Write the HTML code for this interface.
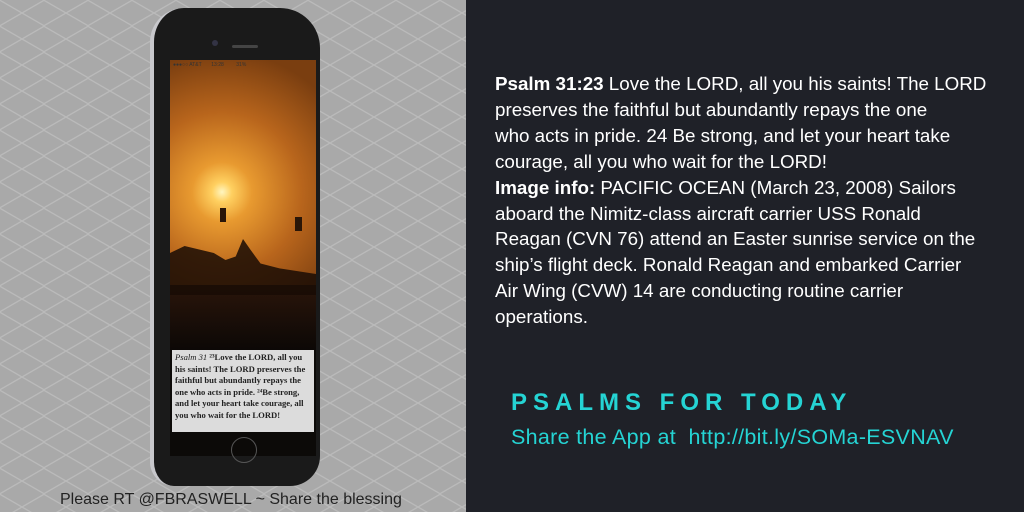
<!DOCTYPE html><html><head><style>
body{margin:0;width:1024px;height:512px;overflow:hidden;position:relative;font-family:"Liberation Sans",sans-serif}
#l{position:absolute;left:0;top:0;width:466px;height:512px;background-color:#a9a9a9;
background-image:linear-gradient(30deg,transparent 48%,#bababa 49%,#bababa 51%,transparent 52%),linear-gradient(150deg,transparent 48%,#bababa 49%,#bababa 51%,transparent 52%);background-size:44px 26px}
#r{position:absolute;left:466px;top:0;width:558px;height:512px;background:#1f2128}
.t{position:absolute;left:495px;top:71px;width:520px;white-space:nowrap;color:#fff;font-family:"Liberation Sans",sans-serif;font-size:18.8px;line-height:25.9px}
.ph{position:absolute;left:150px;top:8px;width:170px;height:478px;border-radius:34px 40px 30px 24px;background:#1a1a1a;border-left:4px solid #c8c8cc;box-sizing:border-box}
.scr{position:absolute;left:170px;top:60px;width:146px;height:396px;background:#0c0a08;overflow:hidden}
.img{position:absolute;left:0;top:0;width:146px;height:230px;background:radial-gradient(circle at 52px 132px,#fff6c0 0,#ffd060 10px,#e89a30 30px,#b8651c 80px,#7a3e10 140px)}
.dark{position:absolute;left:0;top:225px;width:146px;height:65px;background:linear-gradient(#2a150a,#0c0806)}
.vt{position:absolute;left:2px;top:290px;width:142px;height:82px;background:#dcdcdc;font-family:"Liberation Serif",serif;font-size:8.6px;line-height:11.5px;font-weight:bold;color:#222;padding:2px 3px;box-sizing:border-box}
</style></head><body>
<div id="l"></div><div id="r"></div>
<div class="ph"></div>
<div style="position:absolute;left:212px;top:40px;width:6px;height:6px;border-radius:50%;background:#334"></div>
<div style="position:absolute;left:232px;top:45px;width:26px;height:3px;border-radius:2px;background:#444"></div>
<div class="scr"><div class="img"></div><div class="dark"></div>
<div style="position:absolute;left:0;top:165px;width:146px;height:70px;background:rgba(25,12,5,.85);clip-path:polygon(0 40%,10% 30%,20% 35%,30% 40%,38% 50%,45% 45%,50% 20%,55% 35%,62% 55%,75% 62%,100% 70%,100% 100%,0 100%)"></div>
<div style="position:absolute;left:50px;top:148px;width:6px;height:14px;background:#2a1608"></div>
<div style="position:absolute;left:125px;top:157px;width:7px;height:14px;background:#2a1608"></div>
<div style="position:absolute;left:3px;top:2px;font-size:5px;color:#333">●●●○○ AT&amp;T &nbsp;&nbsp;&nbsp;&nbsp;&nbsp; 13:28 &nbsp;&nbsp;&nbsp;&nbsp;&nbsp;&nbsp;&nbsp; 31%</div>
<div class="vt"><i style="font-weight:normal">Psalm 31</i> ²³Love the LORD, all you his saints! The LORD preserves the faithful but abundantly repays the one who acts in pride. ²⁴Be strong, and let your heart take courage, all you who wait for the LORD!</div>
</div>
<div style="position:absolute;left:231px;top:437px;width:24px;height:24px;border-radius:50%;border:1.5px solid #555"></div>
<div style="position:absolute;left:60px;top:491px;font-size:16px;color:#222">Please RT @FBRASWELL ~ Share the blessing</div>
<div class="t"><b>Psalm 31:23</b> Love the LORD, all you his saints! The LORD<br>preserves the faithful but abundantly repays the one<br>who acts in pride. 24 Be strong, and let your heart take<br>courage, all you who wait for the LORD!<br><b>Image info:</b> PACIFIC OCEAN (March 23, 2008) Sailors<br>aboard the Nimitz-class aircraft carrier USS Ronald<br>Reagan (CVN 76) attend an Easter sunrise service on the<br>ship’s flight deck. Ronald Reagan and embarked Carrier<br>Air Wing (CVW) 14 are conducting routine carrier<br>operations.</div>
<div style="position:absolute;left:511px;top:389px;font-size:24px;font-weight:bold;letter-spacing:6px;color:#25d4d4">PSALMS FOR TODAY</div>
<div style="position:absolute;left:511px;top:425px;font-size:21.5px;letter-spacing:0.3px;color:#25d4d4">Share the App at&nbsp; http://bit.ly/SOMa-ESVNAV</div>
</body></html>
